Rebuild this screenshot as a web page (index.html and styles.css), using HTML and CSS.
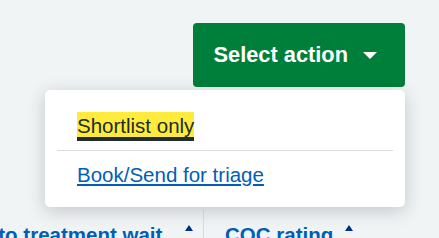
FILE: index.html
```html
<!DOCTYPE html>
<html lang="en">
<head>
    <meta charset="UTF-8">
    <meta name="viewport" content="width=device-width, initial-scale=1.0">
    <title>Results</title>
    <link rel="stylesheet" href="styles.css">
</head>
<body>
    <div class="toolbar">
        <div class="action-menu">
            <button class="action-button" type="button">
                Select action
                <span class="caret"></span>
            </button>
            <ul class="action-list">
                <li class="action-item"><a href="#" class="focused">Shortlist only</a></li>
                <li class="action-item"><a href="#">Book/Send for triage</a></li>
            </ul>
        </div>
    </div>

    <div class="results-head">
        <div class="head-cell wait">
            <a href="#" class="sort-link">Time to treatment wait <span class="sort-arrow wide"></span></a>
        </div>
        <div class="head-cell">
            <a href="#" class="sort-link">CQC rating <span class="sort-arrow"></span></a>
        </div>
    </div>
</body>
</html>
```

FILE: styles.css
```css
:root {
    --bg-color: #f0f4f5;
    --green: #007f3b;
    --blue: #005eb8;
    --text-color: #212b32;
    --border-color: #d8dde0;
    --focus-color: #ffeb3b;
}

body {
    margin: 0;
    font-family: "Liberation Sans", Arial, sans-serif;
    background-color: var(--bg-color);
    color: var(--text-color);
    overflow: hidden;
}

.toolbar {
    display: flex;
    justify-content: flex-end;
    padding: 23px 34px 0;
}

.action-menu {
    position: relative;
}

.action-button {
    display: flex;
    align-items: center;
    gap: 15px;
    height: 64px;
    padding: 0 28px 0 21px;
    border: 0;
    border-radius: 4px;
    background-color: var(--green);
    color: #fff;
    font-family: inherit;
    font-size: 21.8px;
    font-weight: bold;
    white-space: nowrap;
    cursor: pointer;
}

.caret {
    width: 0;
    height: 0;
    border-left: 7px solid transparent;
    border-right: 7px solid transparent;
    border-top: 7px solid #fff;
}

.action-list {
    position: absolute;
    top: 67px;
    right: 0;
    width: 336px;
    margin: 0;
    padding: 12px 12px 8px;
    list-style: none;
    background-color: #fff;
    border-radius: 5px;
    box-shadow: 0 4px 18px rgba(33, 43, 50, 0.22);
    z-index: 10;
}

.action-item {
    padding: 11px 20px;
    font-size: 20.5px;
    line-height: 26px;
}

.action-item + .action-item {
    border-top: 1px solid var(--border-color);
}

.action-item a {
    color: var(--blue);
}

.action-item a.focused {
    color: var(--text-color);
    text-decoration: none;
    background-color: var(--focus-color);
    box-shadow: 0 -2px var(--focus-color), 0 4px var(--text-color);
}

.results-head {
    display: flex;
    margin-top: 123px;
}

.head-cell {
    padding: 12px 21px;
    font-size: 20.5px;
    font-weight: bold;
    line-height: 26px;
    white-space: nowrap;
}

.head-cell.wait {
    display: flex;
    justify-content: flex-end;
    width: 204px;
    padding: 12px 10px 12px 0;
    box-sizing: border-box;
    border-right: 1px solid var(--border-color);
    overflow: hidden;
}

.sort-link {
    color: var(--blue);
    text-decoration: none;
}

.sort-arrow {
    display: inline-block;
    width: 0;
    height: 0;
    margin-left: 6px;
    vertical-align: 0.55em;
    border-left: 4px solid transparent;
    border-right: 4px solid transparent;
    border-bottom: 6px solid #003087;
}

.sort-arrow.wide {
    margin-left: 17px;
}
```
